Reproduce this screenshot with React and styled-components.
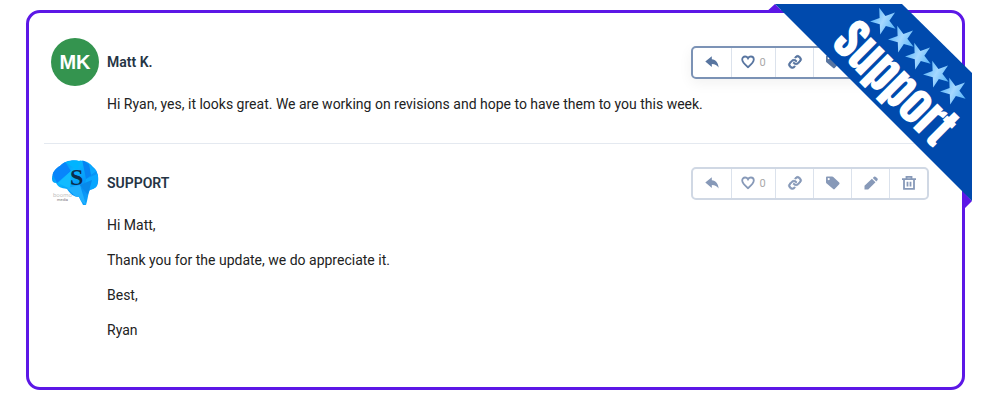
import React from 'react';
import styled, { createGlobalStyle } from 'styled-components';
import { BiLink } from 'react-icons/bi';

const GlobalStyle = createGlobalStyle`
    body {
        margin: 0;
        background: #ffffff;
        font-family: Roboto, "Liberation Sans", sans-serif;
    }
`

const Page = styled.main`
    position: relative;
    padding: 10px 35px 10px 26px;
`

const Panel = styled.section`
    border: 3px solid #5c17e6;
    border-radius: 14px;
    padding: 25px 33px 47px 15px;
`

const Message = styled.article`
    display: grid;
    grid-template-columns: 48px 1fr;
    column-gap: 8px;
    padding: 0 0 0 7px;
`

const Divider = styled.hr`
    height: 1px;
    margin: 29px 0 15px;
    border: 0;
    background: #e4e9f0;
`

const Avatar = styled.div`
    display: flex;
    align-items: center;
    justify-content: center;
    width: 48px;
    height: 48px;
    border-radius: 50%;
    background: #34944f;
    color: #ffffff;
    font-family: "Liberation Sans", sans-serif;
    font-size: 20px;
    font-weight: 700;
`

const MessageHead = styled.header`
    display: flex;
    align-items: center;
    justify-content: space-between;
    height: 48px;
`

const Sender = styled.h2`
    margin: 0;
    color: #253444;
    font-size: 14px;
    font-weight: 600;
`

const Body = styled.div`
    grid-column: 2;
    color: #222222;
    font-size: 14px;
    line-height: 20px;
`

const Line = styled.p`
    margin: 8px 0 0;

    & + & {
        margin-top: 15px;
    }
`

const Toolbar = styled.div`
    display: flex;
    box-sizing: border-box;
    height: 33px;
    border: 2px solid ${({$active}) => ($active ? '#7b92b5' : '#d0d8e4')};
    border-radius: 5px;
    color: ${({$active}) => ($active ? '#5875a0' : '#8799b8')};
    box-shadow: ${({$active}) => ($active ? '0 4px 14px rgba(0, 0, 0, 0.06)' : 'none')};
`

const ToolButton = styled.button`
    display: flex;
    align-items: center;
    justify-content: center;
    gap: 4px;
    box-sizing: border-box;
    width: ${({$wide}) => ($wide ? '44px' : '38px')};
    padding: 0;
    border: 0;
    background: transparent;
    color: inherit;
    cursor: pointer;

    & + & {
        border-left: 1px solid #dbe2ec;
    }
`

const Count = styled.span`
    color: #a9a9a9;
    font-family: Roboto, sans-serif;
    font-size: 11px;
`

const LinkIcon = styled(BiLink)`
    stroke: currentColor;
    stroke-width: 1px;
`

const Ribbon = styled.svg`
    position: absolute;
    top: 4px;
    right: 28px;
`

const RibbonText = styled.text`
    fill: #ffffff;
    font-family: Anton, Impact, "Roboto Condensed", "Liberation Sans", sans-serif;
    font-size: 47px;
    font-weight: 400;
`

const ReplyIcon = () => (
    <svg width="14" height="12" viewBox="0 0 14 12" fill="currentColor">
        <path d="M.3 5.6L6.8 .3V3.2C10.8 3.6 13.4 6.6 13.6 11.6C12 9.1 10.2 8.1 6.8 8V11Z" />
    </svg>
)

const HeartIcon = () => (
    <svg width="14" height="14" viewBox="0 0 14 14" fill="none" stroke="currentColor" strokeWidth="1.8">
        <path d="M7 12.2C4 9.7 1.2 7.3 1.2 4.6C1.2 2.7 2.5 1.5 4.1 1.5C5.4 1.5 6.4 2.2 7 3.3C7.6 2.2 8.6 1.5 9.9 1.5C11.5 1.5 12.8 2.7 12.8 4.6C12.8 7.3 10 9.7 7 12.2Z" />
    </svg>
)

const TagIcon = () => (
    <svg width="16" height="16" viewBox="0 0 16 16" fill="currentColor" fillRule="evenodd">
        <path d="M1 2.5Q1 1.5 2 1.5H7.2Q7.8 1.5 8.3 2L14.2 7.6Q15 8.4 14.2 9.2L9.7 14.1Q9 14.8 8.2 14.1L1.7 8.6Q1 8 1 7.2ZM3.7 3A1.1 1.1 0 1 0 3.7 5.2A1.1 1.1 0 1 0 3.7 3Z" />
    </svg>
)

const PencilIcon = () => (
    <svg width="14" height="14" viewBox="0 0 14 14" fill="currentColor">
        <path d="M.5 13.4V9.7L7.9 2.7L11.5 6.3L4.2 13.4ZM8.8 1.9L10 .7Q11 0 11.9 .9L13.3 2.3Q14.2 3.3 13.4 4.3L12.3 5.4Z" />
    </svg>
)

const TrashIcon = () => (
    <svg width="14" height="14" viewBox="0 0 14 14" fill="none" stroke="currentColor" strokeWidth="1.8">
        <path d="M0 3.1H14M4.5 3V.9H9.5V3M2 3.1V12.8H12V3.1M5.5 5.8V10.5M8.5 5.8V10.5" />
    </svg>
)

const BrainLogo = () => (
    <svg width="48" height="48" viewBox="0 0 48 48" role="img" aria-label="Support logo">
        <defs>
            <linearGradient id="brain" x1="0" y1="0" x2="1" y2="1">
                <stop offset="0" stopColor="#0077ee" />
                <stop offset="0.35" stopColor="#08b4ff" />
                <stop offset="0.65" stopColor="#0890f5" />
                <stop offset="1" stopColor="#12b5ff" />
            </linearGradient>
            <clipPath id="brainShape">
                <path d="M1 20C1 13 5 9 9 7C13 2 22 0 28 2C34 1 39 4 42 8C46 11 48 17 47 23C47 28 43 30 39 31C37 34 37 40 35 46H32L28 38C23 38 19 35 16 30C10 29 7 28 5 24C2 24 1 22 1 20Z" />
            </clipPath>
        </defs>
        <g clipPath="url(#brainShape)">
            <rect width="48" height="48" fill="url(#brain)" />
            <path d="M0 12L14 3L20 12L6 24Z" fill="#0885fb" />
            <path d="M14 3L31 0L26 11Z" fill="#00b4ff" />
            <path d="M31 0L46 12L35 20Z" fill="#0783f2" />
            <path d="M38 5L46 12L40 16Z" fill="#0aa8ff" />
            <path d="M7 24L20 12L19 30Z" fill="#12bbff" />
            <path d="M35 20L48 14L45 31L33 30Z" fill="#08a6ff" />
            <path d="M16 29L29 26L35 46L26 39Z" fill="#20b0ff" />
            <path d="M29 26L41 21L37 36Z" fill="#0889ea" />
        </g>
        <text x="19" y="26" fill="#0b2c4d" fontFamily="Liberation Serif, serif" fontSize="24" fontWeight="700">S</text>
        <text x="2" y="38" fill="#c4c4c4" fontFamily="Roboto, sans-serif" fontSize="6">boomo</text>
        <text x="6" y="42" fill="#777777" fontFamily="Roboto, sans-serif" fontSize="4">media</text>
    </svg>
)

const starPositions = [[119, 17], [137, 35], [154, 52], [172, 70], [189, 87]];

const SupportRibbon = () => (
    <Ribbon width="207" height="207" viewBox="0 0 207 207">
        <defs>
            <linearGradient id="star" x1="0" y1="0" x2="1" y2="1">
                <stop offset="0" stopColor="#3ba6f5" />
                <stop offset="0.5" stopColor="#a5d8ff" />
                <stop offset="1" stopColor="#42aaf5" />
            </linearGradient>
        </defs>
        <path d="M0 9L10 0L19 9ZM198 187L207 197L198 206Z" fill="#5c17e6" />
        <path d="M10 0H137L207 69V197Z" fill="#004aad" />
        {starPositions.map(([x, y]) => (
            <path
            key={x}
            transform={`translate(${x} ${y}) rotate(-20)`}
            d="M0 -14L3.1 -4.3L13.3 -4.3L5.1 1.7L8.2 11.3L0 5.4L-8.2 11.3L-5.1 1.7L-13.3 -4.3L-3.1 -4.3Z"
            fill="url(#star)"
            />
        ))}
        <RibbonText transform="translate(65 41) rotate(45)">Support</RibbonText>
    </Ribbon>
)

const Actions = ({active}) => (
    <Toolbar $active={active}>
        <ToolButton aria-label="Reply"><ReplyIcon /></ToolButton>
        <ToolButton $wide aria-label="Like"><HeartIcon /><Count>0</Count></ToolButton>
        <ToolButton aria-label="Copy link"><LinkIcon size={18} /></ToolButton>
        <ToolButton aria-label="Tag"><TagIcon /></ToolButton>
        <ToolButton aria-label="Edit"><PencilIcon /></ToolButton>
        <ToolButton aria-label="Delete"><TrashIcon /></ToolButton>
    </Toolbar>
)

const App = () => {
    return (
        <>
            <GlobalStyle />
            <Page>
                <Panel>
                    <Message>
                        <Avatar>MK</Avatar>
                        <MessageHead>
                            <Sender>Matt K.</Sender>
                            <Actions active />
                        </MessageHead>
                        <Body>
                            <Line>Hi Ryan, yes, it looks great. We are working on revisions and hope to have them to you this week.</Line>
                        </Body>
                    </Message>
                    <Divider />
                    <Message>
                        <BrainLogo />
                        <MessageHead>
                            <Sender>SUPPORT</Sender>
                            <Actions />
                        </MessageHead>
                        <Body>
                            <Line>Hi Matt,</Line>
                            <Line>Thank you for the update, we do appreciate it.</Line>
                            <Line>Best,</Line>
                            <Line>Ryan</Line>
                        </Body>
                    </Message>
                </Panel>
                <SupportRibbon />
            </Page>
        </>
    )
}

export default App
